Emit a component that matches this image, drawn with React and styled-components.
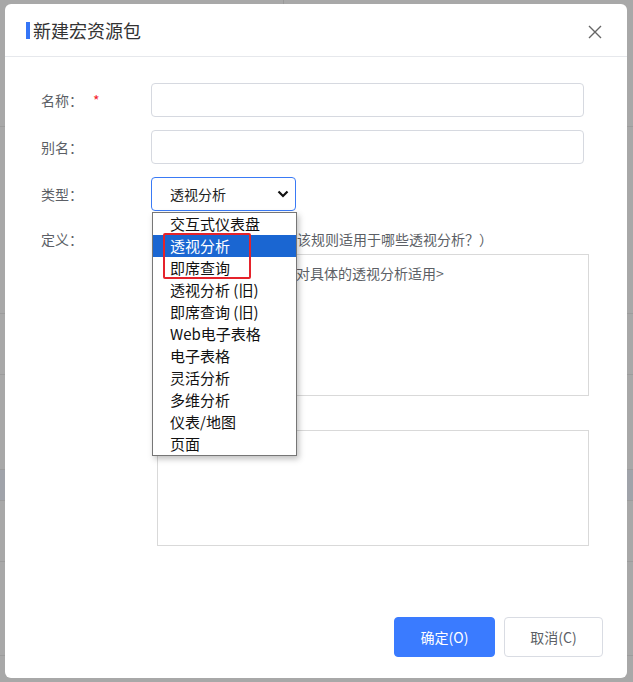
import React from 'react';
import styled, { createGlobalStyle } from 'styled-components';

const GlobalStyle = createGlobalStyle`
  html, body {
    margin: 0;
    padding: 0;
    background: #a8a8a8;
    font-family: "Noto Sans CJK SC", "Noto Sans", sans-serif;
  }
`;

const Page = styled.div`
  position: relative;
  width: 633px;
  height: 682px;
  overflow: hidden;
  background: #a8a8a8;
`;

const BackPage = styled.div`
  display: flex;
  flex-direction: column;
`;

const BackSearch = styled.div`
  height: 8px;
  margin-left: 283px;
  border-left: 1px solid #999;
`;

const BackRow = styled.div`
  height: ${(p) => p.h}px;
  border-bottom: 1px solid #9c9c9c;
  background: ${(p) => (p.active ? '#a0a3aa' : 'transparent')};
`;

const Modal = styled.div`
  position: absolute;
  left: 5px;
  top: 4px;
  width: 622px;
  height: 674px;
  background: #fff;
  border-radius: 6px;
  display: flex;
  flex-direction: column;
`;

const Header = styled.div`
  height: 52px;
  border-bottom: 1px solid #e6e8ec;
  display: flex;
  align-items: center;
  justify-content: space-between;
  padding: 0 24px 0 21px;
`;

const Title = styled.div`
  display: flex;
  align-items: center;
  font-size: 18px;
  color: #333;
  &::before {
    content: '';
    width: 4px;
    height: 17px;
    background: #3575f6;
    margin-right: 3px;
  }
`;

const Close = styled.button`
  border: none;
  background: none;
  padding: 0;
  width: 16px;
  height: 16px;
  display: flex;
  align-items: center;
  justify-content: center;
  margin-top: 4px;
`;

const Body = styled.div`
  flex: 1;
  padding: 26px 43px 0 36px;
  display: grid;
  grid-template-columns: 110px 1fr;
  row-gap: 13px;
  align-content: start;
  position: relative;
`;

const Label = styled.div`
  height: ${(p) => p.h || 34}px;
  margin-top: ${(p) => p.mt || 0}px;
  display: flex;
  align-items: center;
  font-size: 14px;
  color: #5c5f66;
`;

const Required = styled.span`
  color: #f5222d;
  margin-left: 10px;
`;

const Input = styled.div`
  height: 32px;
  border: 1px solid #d6d9e0;
  border-radius: 4px;
`;

const SelectWrap = styled.div`
  position: relative;
  width: 145px;
`;

const Select = styled.div`
  height: 32px;
  border: 1px solid #3a7af5;
  border-radius: 4px;
  display: flex;
  align-items: center;
  justify-content: space-between;
  padding: 0 6px 0 18px;
  font-size: 14px;
  color: #222;
`;

const DropList = styled.div`
  position: absolute;
  left: 1px;
  top: 35px;
  width: 143px;
  border: 1px solid #767676;
  background: #fff;
  box-shadow: 2px 3px 6px rgba(0, 0, 0, 0.25);
  z-index: 5;
`;

const Option = styled.div`
  height: 22px;
  line-height: 22px;
  padding-left: 17px;
  font-size: 15px;
  color: ${(p) => (p.selected ? '#fff' : '#111')};
  background: ${(p) => (p.selected ? '#1a66d2' : '#fff')};
  white-space: nowrap;
`;

const Mark = styled.div`
  position: absolute;
  left: 12px;
  top: 56px;
  width: 84px;
  height: 42px;
  border: 2px solid #e5232b;
  border-radius: 2px;
  z-index: 6;
`;

const DefBlock = styled.div`
  display: flex;
  flex-direction: column;
  margin: 4px -5px 0 6px;
`;

const Hint = styled.div`
  font-size: 14px;
  color: #5c5f66;
  height: 22px;
  line-height: 22px;
  padding-left: 140px;
  white-space: nowrap;
`;

const TextBox = styled.div`
  box-sizing: border-box;
  height: ${(p) => p.h}px;
  border: 1px solid #d9d9d9;
  margin-top: ${(p) => p.mt}px;
  padding: 8px 0 0 ${(p) => p.indent || 10}px;
  font-size: 14px;
  color: #5c5f66;
`;

const Footer = styled.div`
  display: flex;
  justify-content: flex-end;
  gap: 9px;
  padding: 0 24px 21px 0;
`;

const Button = styled.button`
  width: ${(p) => p.w}px;
  height: 40px;
  border-radius: 4px;
  font-size: 14px;
  font-family: inherit;
  border: 1px solid ${(p) => (p.primary ? '#3a7bff' : '#d9dce3')};
  background: ${(p) => (p.primary ? '#3a7bff' : '#fff')};
  color: ${(p) => (p.primary ? '#fff' : '#5c5f66')};
`;

const options = [
  '交互式仪表盘',
  '透视分析',
  '即席查询',
  '透视分析 (旧)',
  '即席查询 (旧)',
  'Web电子表格',
  '电子表格',
  '灵活分析',
  '多维分析',
  '仪表/地图',
  '页面',
];

const App = () => {
  return (
    <Page>
      <GlobalStyle />
      <BackPage>
        <BackSearch />
        <BackRow h={118} />
        <BackRow h={186} />
        <BackRow h={60} />
        <BackRow h={94} />
        <BackRow h={30} active />
        <BackRow h={60} />
        <BackRow h={93} />
      </BackPage>
      <Modal>
        <Header>
          <Title>新建宏资源包</Title>
          <Close>
            <svg width="14" height="14" viewBox="0 0 14 14">
              <path d="M1 1L13 13M13 1L1 13" stroke="#666" strokeWidth="1.4" />
            </svg>
          </Close>
        </Header>
        <Body>
          <Label>
            名称：<Required>*</Required>
          </Label>
          <Input />
          <Label>别名：</Label>
          <Input />
          <Label>类型：</Label>
          <SelectWrap>
            <Select>
              透视分析
              <svg width="12" height="8" viewBox="0 0 12 8">
                <path d="M1.5 1.5L6 6L10.5 1.5" fill="none" stroke="#111" strokeWidth="2.2" />
              </svg>
            </Select>
            <DropList>
              {options.map((o) => (
                <Option key={o} selected={o === '透视分析'}>
                  {o}
                </Option>
              ))}
            </DropList>
            <Mark />
          </SelectWrap>
          <Label h={22} mt={4}>定义：</Label>
          <DefBlock>
            <Hint>该规则适用于哪些透视分析？）</Hint>
            <TextBox h={142} mt={4} indent={138}>对具体的透视分析适用&gt;</TextBox>
            <TextBox h={116} mt={34} />
          </DefBlock>
        </Body>
        <Footer>
          <Button primary w={101}>确定(O)</Button>
          <Button w={99}>取消(C)</Button>
        </Footer>
      </Modal>
    </Page>
  );
};

export default App;
